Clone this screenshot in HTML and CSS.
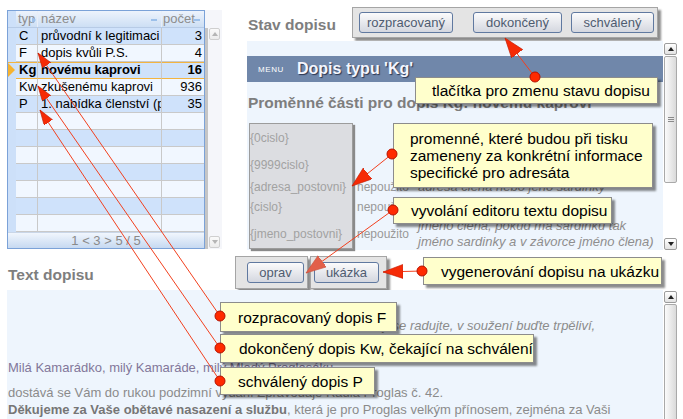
FILE: index.html
```html
<!DOCTYPE html>
<html lang="cs">
<head>
<meta charset="utf-8">
<title>Dopisy</title>
<link rel="stylesheet" href="styles.css">
</head>
<body>
<div class="page">
  <div class="top">
    <div class="grid">
      <div class="grid-main">
        <div class="g-head">
          <div class="c rh"></div>
          <div class="c typ">typ<span class="mk tri"></span></div>
          <div class="c name">název<span class="mk dash"></span></div>
          <div class="c cnt">počet<span class="mk dash"></span></div>
        </div>
        <div class="g-body">
          <div class="g-row"><div class="c rh"></div><div class="c typ green">C</div><div class="c name">průvodní k legitimaci</div><div class="c cnt">3</div></div>
          <div class="g-row"><div class="c rh"></div><div class="c typ white">F</div><div class="c name">dopis kvůli P.S.</div><div class="c cnt">4</div></div>
          <div class="g-row sel"><div class="c rh"><span class="cur"></span></div><div class="c typ">Kg</div><div class="c name">novému kaprovi</div><div class="c cnt">16</div></div>
          <div class="g-row"><div class="c rh"></div><div class="c typ yellow">Kw</div><div class="c name">zkušenému kaprovi</div><div class="c cnt">936</div></div>
          <div class="g-row"><div class="c rh"></div><div class="c typ green">P</div><div class="c name">1. nabídka členství (pro nové členy)</div><div class="c cnt">35</div></div>
          <div class="g-row"><div class="c rh"></div><div class="c typ"></div><div class="c name"></div><div class="c cnt"></div></div>
          <div class="g-row"><div class="c rh"></div><div class="c typ"></div><div class="c name"></div><div class="c cnt"></div></div>
          <div class="g-row"><div class="c rh"></div><div class="c typ"></div><div class="c name"></div><div class="c cnt"></div></div>
          <div class="g-row"><div class="c rh"></div><div class="c typ"></div><div class="c name"></div><div class="c cnt"></div></div>
          <div class="g-row"><div class="c rh"></div><div class="c typ"></div><div class="c name"></div><div class="c cnt"></div></div>
          <div class="g-row"><div class="c rh"></div><div class="c typ"></div><div class="c name"></div><div class="c cnt"></div></div>
          <div class="g-row"><div class="c rh"></div><div class="c typ"></div><div class="c name"></div><div class="c cnt"></div></div>
        </div>
        <div class="pager">1 &lt; 3 &gt; 5 / 5</div>
      </div>
      <div class="g-scroll">
        <div class="g-track">
          <div class="sb-btn up dim"></div>
          <div class="sb-fill"></div>
          <div class="sb-btn down dim"></div>
        </div>
      </div>
    </div>

    <div class="right">
      <div class="stav-row">
        <div class="h-title stav-title">Stav dopisu</div>
        <div class="bgroup states">
          <div class="btn b-rozp">rozpracovaný</div>
          <div class="btn b-dok">dokončený</div>
          <div class="btn b-schv">schválený</div>
        </div>
      </div>
      <div class="panel-top">
        <div class="pt-content">
          <div class="menu-bar">
            <span class="menu-lbl">MENU</span>
            <span class="menu-title">Dopis typu 'Kg'</span>
          </div>
          <div class="h-title vars-title">Proměnné části pro dopis Kg: novému kaprovi</div>
          <div class="vars">
            <div class="vbox">
              <div class="vr r1">{0cislo}</div>
              <div class="vr r2">{9999cislo}</div>
              <div class="vr r3">{adresa_postovni}</div>
              <div class="vr r4">{cislo}</div>
              <div class="vr r5">{jmeno_postovni}</div>
            </div>
            <div class="vuse">
              <div class="vr r1"></div>
              <div class="vr r2"></div>
              <div class="vr r3">nepoužito</div>
              <div class="vr r4">nepoužito</div>
              <div class="vr r5">nepoužito</div>
            </div>
            <div class="vdesc">
              <div class="vr r1"></div>
              <div class="vr r2"></div>
              <div class="vr r3">adresa člena nebo jeho sardinky</div>
              <div class="vr r4">číslo člena</div>
              <div class="vr r5">jméno člena, pokud má sardinku tak<br>jméno sardinky a v závorce jméno člena)</div>
            </div>
          </div>
        </div>
        <div class="vscroll">
          <div class="sb-btn up"></div>
          <div class="sb-thumb"><span class="grip"></span></div>
          <div class="sb-fill"></div>
          <div class="sb-btn down"></div>
        </div>
      </div>
    </div>
  </div>

  <div class="mid">
    <div class="h-title text-title">Text dopisu</div>
    <div class="bgroup g-oprav"><div class="btn b-oprav">oprav</div></div>
    <div class="bgroup g-ukazka"><div class="btn b-ukazka">ukázka</div></div>
  </div>

  <div class="panel-text">
    <div class="ptx-content">
      <div class="motto">V naději se radujte, v soužení buďte trpěliví,</div>
      <div class="greet">Milá Kamarádko, milý Kamaráde, milý Mladý Proglasáku,</div>
      <div class="para p1">dostává se Vám do rukou podzimní vydání Zpravodaje Rádia Proglas č. 42.</div>
      <div class="para"><b>Děkujeme za Vaše obětavé nasazení a službu</b>, která je pro Proglas velkým přínosem, zejména za Vaši</div>
    </div>
    <div class="vscroll low">
      <div class="sb-btn up"></div>
      <div class="sb-thumb long"></div>
    </div>
  </div>

  <div class="callout co1">tlačítka pro zmenu stavu dopisu</div>
  <div class="callout co2">promenné, které budou při tisku<br>zameneny za konkrétní informace<br>specifické pro adresáta</div>
  <div class="callout co3">vyvolání editoru textu dopisu</div>
  <div class="callout co4">vygenerování dopisu na ukázku</div>
  <div class="callout co5">rozpracovaný dopis F</div>
  <div class="callout co6">dokončený dopis Kw, čekající na schválení</div>
  <div class="callout co7">schválený dopis P</div>

  <svg class="arrows" width="683" height="419" viewBox="0 0 683 419">
    <defs>
      <marker id="hb" markerUnits="userSpaceOnUse" markerWidth="22" markerHeight="16" refX="20" refY="7" orient="auto">
        <path d="M0,0 L20,7 L0,14 Z" class="head"/>
      </marker>
      <marker id="hm" markerUnits="userSpaceOnUse" markerWidth="22" markerHeight="16" refX="20" refY="7" orient="auto">
        <path d="M0,0 L20,7 L0,14 Z" class="head soft"/>
      </marker>
      <marker id="hs" markerUnits="userSpaceOnUse" markerWidth="16" markerHeight="12" refX="15" refY="5" orient="auto">
        <path d="M0,0 L15,5 L0,10 Z" class="head"/>
      </marker>
    </defs>
    <line x1="535" y1="77" x2="505" y2="38" marker-end="url(#hb)"/>
    <line x1="392" y1="154" x2="352" y2="186" marker-end="url(#hb)"/>
    <line x1="393" y1="210" x2="306" y2="273" marker-end="url(#hm)"/>
    <line x1="422" y1="271" x2="383" y2="272" marker-end="url(#hb)"/>
    <line x1="220" y1="316" x2="38" y2="53" marker-end="url(#hs)"/>
    <line x1="220" y1="348" x2="38" y2="86" marker-end="url(#hs)"/>
    <line x1="220" y1="381" x2="40" y2="110" marker-end="url(#hs)"/>
    <circle cx="535" cy="77" r="5"/>
    <circle cx="392" cy="154" r="5"/>
    <circle cx="393" cy="210" r="5"/>
    <circle cx="422" cy="271" r="5"/>
    <circle cx="220" cy="316" r="5"/>
    <circle cx="220" cy="348" r="5"/>
    <circle cx="220" cy="381" r="5"/>
  </svg>
</div>
</body>
</html>
```
FILE: styles.css
```css
* { box-sizing: border-box; }
body {
  margin: 0;
  font-family: "Liberation Sans", Arial, sans-serif;
  background: #fff;
  color: #000;
}
.page {
  position: relative;
  width: 683px;
  height: 419px;
  overflow: hidden;
}
.top {
  display: flex;
  align-items: flex-start;
  height: 250px;
}

/* ---------- grid ---------- */
.grid {
  display: flex;
  margin: 10px 0 0 7px;
  height: 239px;
}
.grid-main {
  width: 198px;
  height: 239px;
  border: 1px solid #7ba2d8;
  display: flex;
  flex-direction: column;
}
.g-head {
  display: flex;
  height: 17px;
  background: linear-gradient(#edf3fc, #cddff4);
  border-bottom: 1px solid #b7cbe6;
}
.g-head .c {
  color: #8d8d8d;
  position: relative;
  border-right-color: #e8eef8;
}
.c {
  height: 100%;
  font-size: 13px;
  line-height: 16px;
  white-space: nowrap;
  overflow: hidden;
}
.rh { width: 8px; background: #cde0f9; position: relative; }
.typ { width: 22px; border-right: 1px solid #c9c9c9; padding-left: 2px; }
.name { width: 124px; border-right: 1px solid #c9c9c9; padding-left: 3px; }
.cnt { width: 42px; text-align: right; padding-right: 2px; }
.g-head .cnt { text-align: left; padding-left: 1px; }
.mk { position: absolute; }
.mk.tri {
  right: 1px; top: 6px;
  border-left: 4px solid #9cc0ea;
  border-top: 3px solid transparent;
  border-bottom: 3px solid transparent;
}
.mk.dash {
  right: 4px; top: 8px;
  width: 6px; height: 2px;
  background: #9cc0ea;
}
.g-body { display: flex; flex-direction: column; }
.g-row { display: flex; height: 17px; }
.g-row .c:not(.rh) { border-bottom: 1px solid #c9c9c9; }
.g-row:nth-child(odd) .c:not(.rh) { background: #cfe2fb; }
.g-row:nth-child(even) .c:not(.rh) { background: #f1f7ff; }
.g-row .typ { padding-left: 3px; }
.g-row .c.green { background: #74ef74; }
.g-row .c.yellow { background: #ffff9c; }
.g-row .c.white { background: #fafcff; }
.g-row.sel .c { font-weight: bold; box-shadow: inset 0 1px #f3b440; }
.g-row.sel .c:not(.rh) { border-bottom-color: #f3b440; }
.cur {
  position: absolute;
  left: 0; top: 1px;
  border-left: 7px solid #f6b22f;
  border-top: 7px solid transparent;
  border-bottom: 7px solid transparent;
}
.pager {
  height: 16px;
  background: linear-gradient(#f1f6fd, #c6d9f1);
  border-top: 1px solid #c9d6e8;
  color: #8a8a8a;
  font-size: 13px;
  line-height: 15px;
  text-align: center;
}
.g-scroll {
  width: 17px;
  height: 239px;
  padding-top: 18px;
  background: #f5f6fa;
  display: flex;
}
.g-track {
  flex: 1;
  display: flex;
  flex-direction: column;
  border-left: 3px solid #c5c5c5;
  padding: 0 2px 1px 1px;
}

/* ---------- scrollbars ---------- */
.sb-btn {
  height: 12px;
  width: 11px;
  border: 1px solid #9c9c9c;
  border-radius: 2px;
  background: linear-gradient(#ffffff, #e2e2e2);
  display: flex;
  align-items: center;
  justify-content: center;
  flex: none;
}
.sb-btn.up::after {
  content: "";
  border-left: 3px solid transparent;
  border-right: 3px solid transparent;
  border-bottom: 4px solid #222;
}
.sb-btn.down::after {
  content: "";
  border-left: 3px solid transparent;
  border-right: 3px solid transparent;
  border-top: 4px solid #222;
}
.sb-btn.dim { border-color: #cfcfcf; background: linear-gradient(#fafafa, #ececec); }
.sb-btn.dim::after { border-bottom-color: #b5b5b5; border-top-color: #b5b5b5; }
.sb-fill { flex: 1; }
.vscroll {
  width: 13px;
  margin-left: 1px;
  padding-top: 2px;
  display: flex;
  flex-direction: column;
  background: #fff;
}
.vscroll .sb-btn { width: 13px; }
.sb-thumb {
  height: 127px;
  margin-top: 1px;
  border: 1px solid #a9a9a9;
  border-radius: 2px;
  background: linear-gradient(90deg, #fbfbfb, #dadada);
  display: flex;
  align-items: center;
  justify-content: center;
  flex: none;
}
.sb-thumb.long { height: 130px; }
.grip {
  width: 6px;
  height: 6px;
  background: repeating-linear-gradient(#8a8a8a 0 1px, transparent 1px 2px);
}

/* ---------- right ---------- */
.right { margin-left: 25px; width: 431px; }
.stav-row { display: flex; height: 41px; }
.h-title {
  font-weight: bold;
  font-size: 15.5px;
  line-height: 18px;
  color: #7e7e7e;
  white-space: nowrap;
}
.stav-title { width: 105px; padding-left: 1px; margin-top: 16px; }
.bgroup {
  display: flex;
  align-items: center;
  background: #e4e4e4;
  border: 1px solid #a5a5a5;
  box-shadow: 3px 3px 2px rgba(0, 0, 0, 0.45);
}
.states { margin-top: 7px; height: 31px; width: 306px; padding-left: 6px; }
.btn {
  height: 21px;
  border: 1px solid #6079a0;
  border-radius: 3px;
  background: linear-gradient(#fbfbfc, #d4d7df);
  color: #4f5c70;
  font-size: 13px;
  display: flex;
  align-items: center;
  justify-content: center;
}
.b-rozp { width: 94px; }
.b-dok { width: 89px; margin-left: 20px; }
.b-schv { width: 83px; margin-left: 9px; }

.panel-top { display: flex; height: 209px; }
.pt-content {
  width: 416px;
  background: #eef5fd;
  padding-top: 15px;
}
.menu-bar {
  height: 26px;
  background: #7087aa;
  display: flex;
  align-items: center;
  padding-left: 11px;
}
.menu-lbl {
  width: 39px;
  font-size: 8px;
  color: #fff;
  letter-spacing: 0.6px;
}
.menu-title {
  font-weight: bold;
  font-size: 16px;
  color: #f4f6ff;
  text-shadow: 1px 1px 1px #2a3550;
}
.vars-title { margin: 12px 0 11px 1px; }
.vars { display: flex; margin-left: 2px; }
.vbox {
  width: 104px;
  height: 126px;
  background: #dcdde1;
  border: 1px solid #9c9c9c;
  box-shadow: 2px 2px 1px #8a8a8a;
  flex: none;
}
.vr {
  display: flex;
  align-items: center;
  font-size: 12px;
  color: #a2a2a2;
  white-space: nowrap;
}
.r1 { height: 28px; }
.r2 { height: 26px; }
.r3 { height: 18px; }
.r4 { height: 22px; }
.r5 { height: 32px; }
.vuse { width: 65px; padding-left: 4px; padding-top: 1px; flex: none; }
.vuse .vr { color: #999; }
.vdesc { padding-top: 1px; }
.vdesc .vr {
  font-size: 13px;
  font-style: italic;
  color: #8e8e8e;
  line-height: 16px;
}

/* ---------- middle ---------- */
.mid { display: flex; height: 40px; }
.text-title { width: 235px; padding-left: 8px; margin-top: 16px; }
.g-oprav { margin-top: 6px; height: 33px; width: 73px; padding-left: 11px; }
.g-ukazka { margin-top: 6px; height: 33px; width: 77px; margin-left: 2px; padding-left: 3px; }
.b-oprav { width: 57px; }
.b-ukazka { width: 65px; }

/* ---------- text panel ---------- */
.panel-text { display: flex; margin-left: 7px; height: 129px; }
.ptx-content {
  width: 656px;
  background: #eef5fd;
  padding-top: 27px;
  font-size: 13px;
  line-height: 17px;
  color: #8b8b8b;
  white-space: nowrap;
}
.motto { font-style: italic; padding-left: 335px; }
.greet { margin-top: 25px; padding-left: 1px; color: #82779a; }
.para { padding-left: 1px; }
.p1 { margin-top: 8px; }
.para b { color: #767676; }
.vscroll.low { padding-top: 1px; }

/* ---------- callouts ---------- */
.callout {
  position: absolute;
  z-index: 2;
  background: #ffffcc;
  border: 1px solid #8c8c8c;
  box-shadow: 3px 3px 2px rgba(0, 0, 0, 0.45);
  font-size: 15.5px;
  line-height: 17px;
  color: #000;
  display: flex;
  align-items: center;
  white-space: nowrap;
}
.co1 { left: 415px; top: 77px; width: 243px; height: 27px; padding-left: 16px; }
.co2 { left: 393px; top: 123px; width: 260px; height: 65px; padding-left: 16px; }
.co3 { left: 393px; top: 197px; width: 219px; height: 27px; padding-left: 17px; }
.co4 { left: 423px; top: 257px; width: 239px; height: 28px; padding-left: 17px; }
.co5 { left: 220px; top: 302px; width: 177px; height: 30px; padding-left: 17px; }
.co6 { left: 220px; top: 334px; width: 314px; height: 29px; padding-left: 18px; }
.co7 { left: 220px; top: 367px; width: 155px; height: 28px; padding-left: 17px; }

/* ---------- arrows ---------- */
.arrows {
  position: absolute;
  left: 0;
  top: 0;
  z-index: 3;
  pointer-events: none;
}
.arrows line { stroke: #f2401e; stroke-width: 1; }
.arrows circle { fill: #ff2a00; stroke: #b51200; stroke-width: 1; }
.arrows .head { fill: #f62a06; stroke: #c01a00; stroke-width: 0.6; }
.arrows .head.soft { fill: #e2604a; stroke: #c8543f; }
```
